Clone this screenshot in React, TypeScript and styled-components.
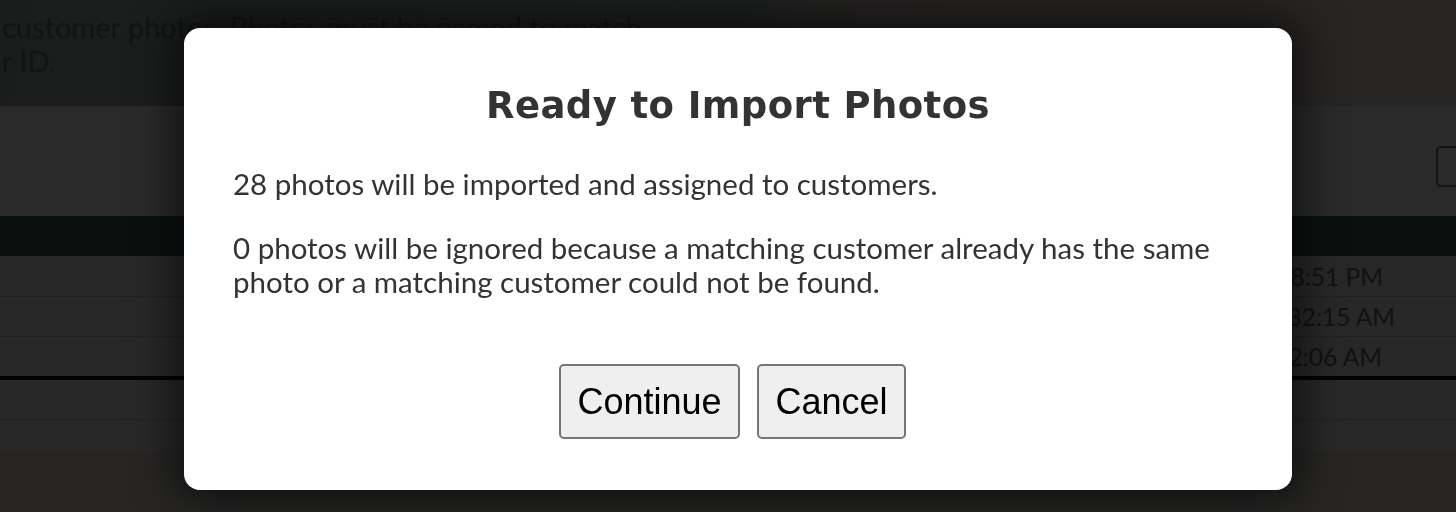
import styled, { createGlobalStyle } from "styled-components";

const GlobalStyle = createGlobalStyle`
  html, body {
    margin: 0;
    padding: 0;
  }
  body {
    background: #272625;
    font-family: Lato, "Open Sans", sans-serif;
    overflow: hidden;
  }
`;

const Page = styled.div`
  width: 1456px;
  height: 512px;
  overflow: hidden;
  background: #272625;
`;

const Intro = styled.div`
  height: 106px;
  box-sizing: border-box;
  padding: 10px 0 0 2px;
  background: linear-gradient(104deg, #1a1d1c 0%, #1d201f 50%, #252322 58%, #282625 100%);
  color: #121413;
  font-size: 29px;
  line-height: 34px;
`;

const Toolbar = styled.div`
  height: 110px;
  background: #2a2a2a;
  display: flex;
  justify-content: flex-end;
  align-items: flex-start;
  padding-top: 40px;
  box-sizing: border-box;
`;

const GhostButton = styled.div`
  width: 40px;
  height: 41px;
  box-sizing: border-box;
  border: 2px solid #131313;
  border-radius: 5px;
  margin-right: -20px;
`;

const TableHead = styled.div`
  height: 40px;
  background: #0b100f;
`;

const Row = styled.div<{ $h?: number; $pad?: number }>`
  height: ${(p) => p.$h ?? 40}px;
  box-sizing: border-box;
  background: #282828;
  display: flex;
  align-items: center;
  justify-content: flex-end;
  padding-right: ${(p) => p.$pad ?? 0}px;
  & + & {
    border-top: 1px solid #212121;
  }
`;

const TimeCell = styled.div`
  color: #101211;
  font-size: 24.5px;
  white-space: nowrap;
`;

const Divider = styled.div`
  height: 4px;
  background: #000;
`;

const Overlay = styled.div`
  position: fixed;
  inset: 0;
  display: flex;
  justify-content: center;
  align-items: flex-start;
  padding: 28px 0 0 20px;
`;

const Modal = styled.div`
  width: 1108px;
  height: 462px;
  box-sizing: border-box;
  background: #fff;
  border-radius: 16px;
  box-shadow: 0 0 40px 12px rgba(0, 0, 0, 0.55);
  padding: 56px 49px 0;
  color: #333;
  display: flex;
  flex-direction: column;
`;

const Title = styled.h2`
  margin: 0;
  text-align: center;
  font-family: "DejaVu Sans", Verdana, sans-serif;
  font-size: 37px;
  letter-spacing: 0.4px;
  line-height: 44px;
  font-weight: 700;
`;

const Text = styled.p<{ $gap: number }>`
  margin: ${(p) => p.$gap}px 0 0;
  font-size: 29.5px;
  line-height: 34px;
`;

const Actions = styled.div`
  display: flex;
  justify-content: center;
  gap: 17px;
  margin-top: 65px;
  padding-right: 11px;
`;

const Button = styled.button`
  font-family: "Liberation Sans", Arial, sans-serif;
  font-size: 36px;
  color: #000;
  background: #efefef;
  border: 2px solid #767676;
  border-radius: 5px;
  padding: 15px 16.5px;
  line-height: 41px;
`;

const times = [
  { t: "11/2/2023 10:08:51 PM", pad: 73 },
  { t: "11/12/2023 1:32:15 AM", pad: 61 },
  { t: "11/12/2023 1:32:06 AM", pad: 74 },
];

export default function App() {
  return (
    <Page>
      <GlobalStyle />
      <Intro>
        customer photos. Photos must be named to match
        <br />
        r ID.
      </Intro>
      <Toolbar>
        <GhostButton />
      </Toolbar>
      <TableHead />
      {times.map((r) => (
        <Row key={r.t} $pad={r.pad}>
          <TimeCell>{r.t}</TimeCell>
        </Row>
      ))}
      <Divider />
      <Row $h={39} />
      <Row $h={31} />
      <Overlay>
        <Modal>
          <Title>Ready to Import Photos</Title>
          <Text $gap={39}>28 photos will be imported and assigned to customers.</Text>
          <Text $gap={30}>
            0 photos will be ignored because a matching customer already has the same photo or a matching customer could not be found.
          </Text>
          <Actions>
            <Button>Continue</Button>
            <Button>Cancel</Button>
          </Actions>
        </Modal>
      </Overlay>
    </Page>
  );
}
